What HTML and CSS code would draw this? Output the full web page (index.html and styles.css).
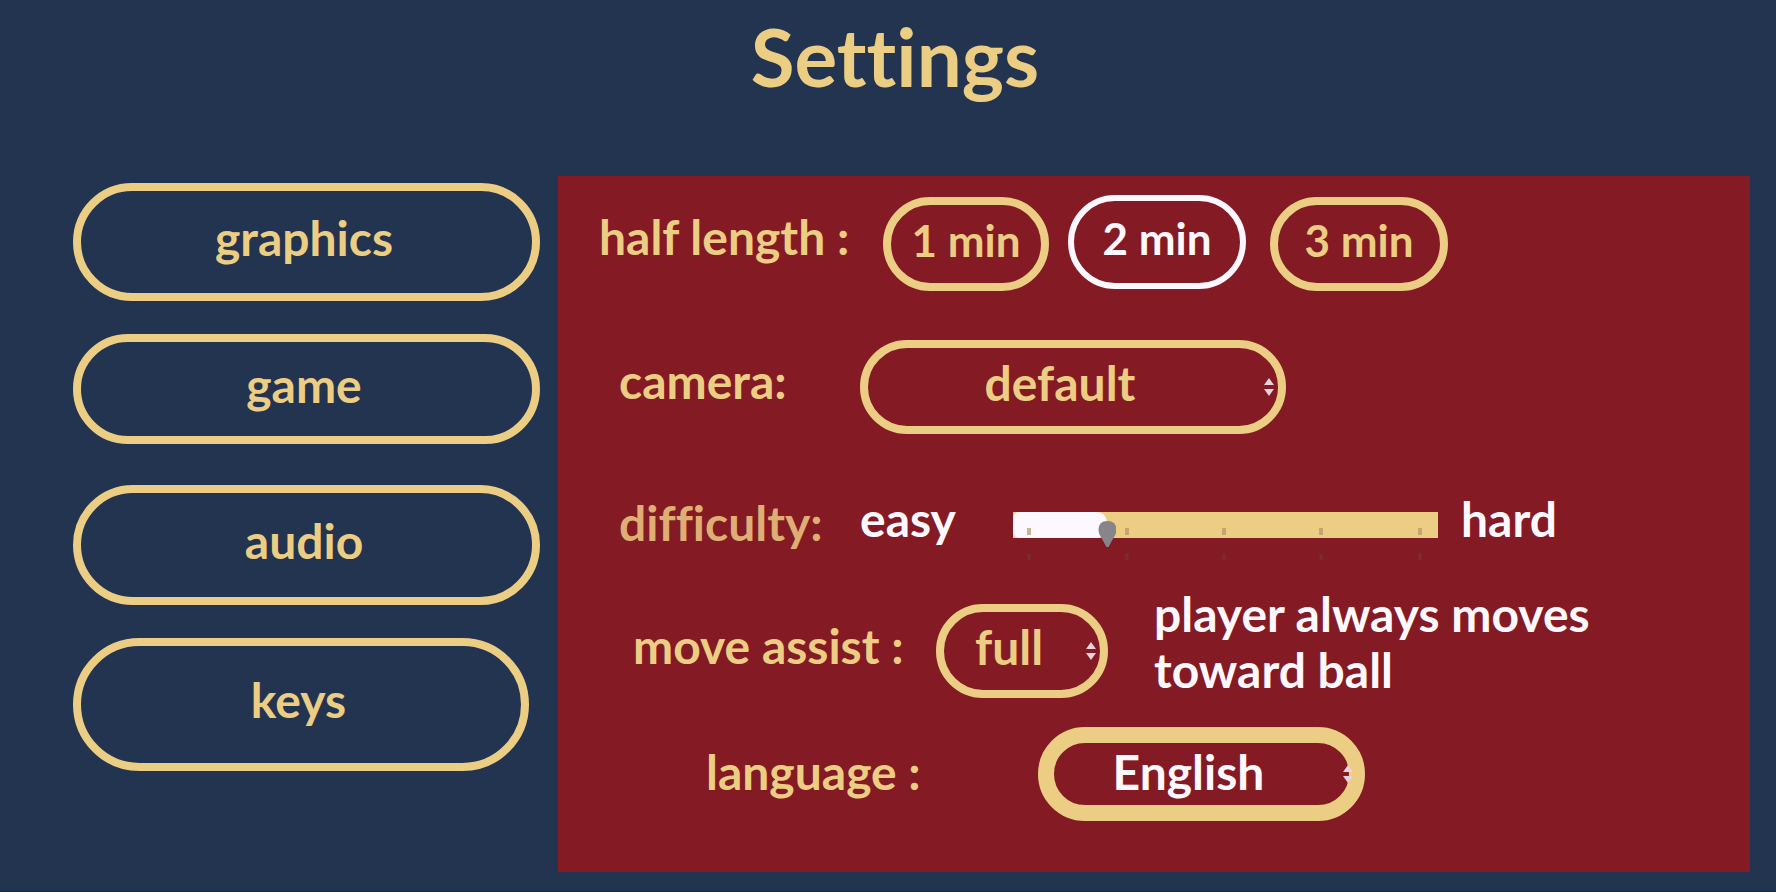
FILE: index.html
```html
<!DOCTYPE html>
<html lang="en">
<head>
<meta charset="utf-8">
<title>Settings</title>
<link rel="stylesheet" href="styles.css">
</head>
<body>
<header class="header"><h1 class="title">Settings</h1></header>
<main class="layout">
  <nav class="tabs" aria-label="Settings sections">
    <button type="button" class="pill tab tab-graphics">graphics</button>
    <button type="button" class="pill tab tab-game">game</button>
    <button type="button" class="pill tab tab-audio">audio</button>
    <button type="button" class="pill tab tab-keys">keys</button>
  </nav>
  <section class="panel">
    <div class="row row-length" role="group" aria-labelledby="length-label">
      <span class="label raised" id="length-label">half length :</span>
      <div class="choices">
        <button type="button" class="pill choice choice-short" aria-pressed="false">1 min</button>
        <button type="button" class="pill choice selected" aria-pressed="true">2 min</button>
        <button type="button" class="pill choice last" aria-pressed="false">3 min</button>
      </div>
    </div>
    <div class="row row-camera">
      <label class="label raised" for="camera">camera:</label>
      <div class="select-box select-camera">
        <select class="pill select" id="camera"><option>default</option></select>
        <svg class="arrows" viewBox="0 0 10 18" aria-hidden="true"><path d="M5 0 10 7H0zM5 18 10 11H0z"/></svg>
      </div>
    </div>
    <div class="row row-difficulty">
      <label class="label dim" for="difficulty">difficulty:</label>
      <span class="easy">easy</span>
      <div class="slider">
        <input class="range" id="difficulty" type="range" min="0" max="100" value="21">
        <svg class="ticks" viewBox="0 0 425 50" aria-hidden="true">
          <path d="M16 16v7M114 16v7M211 16v7M308 16v7M407 16v7" stroke="#b0986c" stroke-width="4"/>
          <path d="M16 42v6M114 41v7M211 41v7M308 42v6M407 41v7" stroke="#6e3a3c" stroke-width="3"/>
        </svg>
      </div>
      <span class="hard">hard</span>
    </div>
    <div class="row row-assist">
      <label class="label" for="assist">move assist :</label>
      <div class="select-box select-assist">
        <select class="pill select" id="assist"><option>full</option></select>
        <svg class="arrows" viewBox="0 0 10 18" aria-hidden="true"><path d="M5 0 10 7H0zM5 18 10 11H0z"/></svg>
      </div>
      <p class="hint">player always moves toward ball</p>
    </div>
    <div class="row row-language">
      <label class="label" for="language">language :</label>
      <div class="select-box select-language">
        <select class="pill select focused" id="language"><option>English</option></select>
        <svg class="arrows" viewBox="0 0 10 18" aria-hidden="true"><path d="M5 0 10 7H0zM5 18 10 11H0z"/></svg>
      </div>
    </div>
  </section>
</main>
</body>
</html>
```

FILE: styles.css
```css
:root {
  --navy: #233450;
  --red: #841b24;
  --gold: #ebcd84;
  --white: #fdf8fd;
}
* { box-sizing: border-box; }
body {
  margin: 0;
  min-height: 100vh;
  display: flex;
  flex-direction: column;
  padding-bottom: 19px;
  border-bottom: 1px solid #1b273c;
  background: var(--navy);
  color: var(--gold);
  font: 700 48px/56px Lato, "Open Sans", sans-serif;
  font-variant-ligatures: none;
}
.header { padding: 8px 0 72px 14px; }
.title { margin: 0; font-size: 80px; line-height: 96px; text-align: center; }
.layout {
  flex: 1;
  display: grid;
  grid-template-columns: 558fr 1192fr;
  padding-right: 26px;
}
.pill {
  border: 8px solid var(--gold);
  border-radius: 70px;
  background: transparent;
  color: inherit;
  font: inherit;
  font-variant-ligatures: none;
  padding: 0 0 9px;
}
.tabs {
  display: flex;
  flex-direction: column;
  gap: 33px;
  padding: 7px 18px 0 73px;
}
.tab { height: 118px; padding-right: 5px; }
.tab-game { height: 110px; margin-bottom: 8px; }
.tab-audio { height: 120px; }
.tab-keys { height: 133px; margin-right: 11px; }
.panel { background: var(--red); padding: 19px 0; }
.row { display: flex; align-items: center; }
.label { flex: none; padding-bottom: 4px; white-space: nowrap; }
.raised { padding-bottom: 12px; }
.dim { padding: 8px 0 0; color: #dfae74; }
.row-length { padding-left: 41px; margin-bottom: 49px; }
.row-length .label { width: 284px; }
.choices { display: flex; align-items: flex-end; }
.choice { width: 178px; height: 94px; font-size: 44px; white-space: nowrap; }
.choice-short { width: 166px; margin-right: 19px; }
.selected {
  border-width: 6px;
  border-color: var(--white);
  color: var(--white);
  margin-bottom: 2px;
}
.last { margin-left: 24px; }
.row-camera { padding-left: 61px; margin-bottom: 53px; }
.row-camera .label { width: 241px; }
.select-box { position: relative; flex: none; }
.select {
  display: block;
  width: 100%;
  height: 94px;
  appearance: none;
  padding-right: 26px;
  text-align: center;
  text-align-last: center;
}
.select-camera { width: 426px; }
.select-assist { width: 172px; }
.select-language { width: 327px; }
.focused { border-width: 16px; padding-bottom: 4px; color: var(--white); }
.arrows {
  position: absolute;
  right: 12px;
  top: 38px;
  width: 10px;
  height: 18px;
  fill: #e6d3dc;
  pointer-events: none;
}
.row-difficulty { padding-left: 61px; margin-bottom: 35px; }
.row-difficulty .label { width: 241px; }
.easy { width: 153px; color: var(--white); }
.hard { margin-left: 23px; color: var(--white); }
.slider {
  position: relative;
  flex: 0 1 425px;
  height: 26px;
  margin-top: 12px;
  background: var(--gold);
}
.slider::before {
  content: "";
  position: absolute;
  inset: 0 auto 0 0;
  width: 22%;
  border-radius: 6px 10px 10px 6px;
  background: var(--white);
}
.range {
  position: absolute;
  inset: 0;
  width: 100%;
  height: 44px;
  margin: 0;
  appearance: none;
  background: transparent;
}
.range::-webkit-slider-runnable-track { height: 44px; background: transparent; }
.range::-webkit-slider-thumb {
  appearance: none;
  width: 18px;
  height: 26px;
  margin-top: 9px;
  background: #87858a;
  clip-path: path("M0 9Q0 0 9 0Q18 0 18 9Q18 13 15 17L10 26H8L3 17Q0 13 0 9Z");
}
.ticks {
  position: absolute;
  left: 0;
  top: 0;
  width: 100%;
  height: 50px;
  opacity: 0.7;
  pointer-events: none;
}
.row-assist { padding-left: 75px; margin-bottom: 29px; align-items: flex-end; }
.row-assist .label { width: 303px; padding-bottom: 24px; }
.hint { margin: 0 0 0 46px; width: 466px; color: var(--white); }
.row-language { padding-left: 148px; }
.row-language .label { width: 332px; }
```
